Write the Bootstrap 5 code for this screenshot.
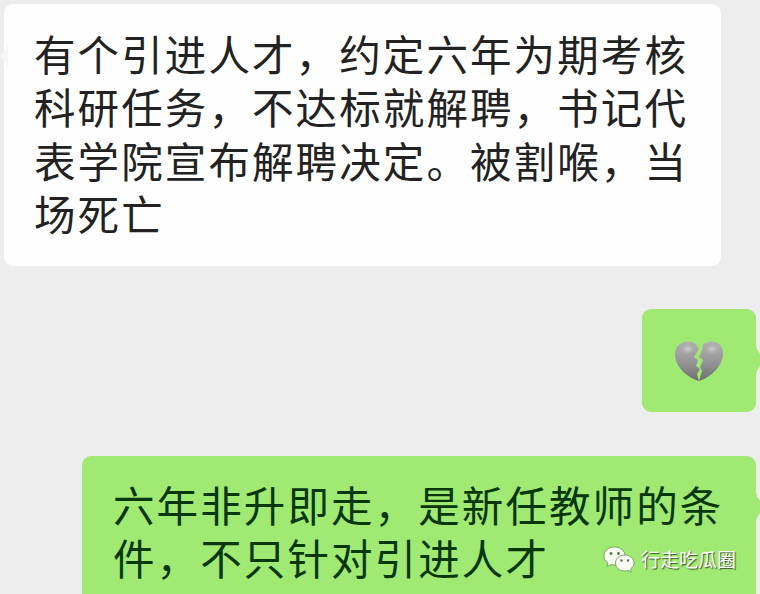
<!DOCTYPE html>
<html lang="zh-CN">
<head>
    <meta charset="UTF-8">
    <meta name="viewport" content="width=device-width, initial-scale=1.0">
    <title>聊天记录</title>
    <link href="https://cdn.jsdelivr.net/npm/bootstrap@5.3.0/dist/css/bootstrap.min.css" rel="stylesheet">
    <style>
        body {
            height: 594px;
            background: #ededed;
            font-family: "Noto Sans CJK SC", sans-serif;
        }
        .chat {
            height: 594px;
            padding: 4px 4px 0;
        }
        .bubble {
            font-size: 41.5px;
            letter-spacing: 2.1px;
            line-height: 53.4px;
            white-space: nowrap;
            border-radius: 9px;
        }
        .bubble-in {
            width: 717px;
            height: 262px;
            padding: 23px 0 0 30px;
            background: #fefefe;
            color: #222;
        }
        .bubble-out {
            background: #a0e972;
            color: #07370b;
        }
        .bubble-heart {
            width: 114px;
            height: 103px;
            margin-top: 43px;
        }
        .bubble-reply {
            width: 674px;
            height: 150px;
            margin-top: 44px;
            padding: 22px 0 0 31px;
        }
        .tail {
            position: absolute;
            width: 8px;
            height: 28px;
        }
        .tail-in { left: -4px; top: 38px; }
        .tail-out { right: -6px; top: 37px; }
        .watermark {
            position: absolute;
            left: 603px;
            top: 544px;
            gap: 6px;
            font-size: 19px;
            line-height: 30px;
            color: #fff;
            text-shadow: 1px 1px 1px #35552a;
        }
    </style>
</head>
<body class="m-0 overflow-hidden">
    <main class="chat d-flex flex-column position-relative overflow-hidden">
        <div class="bubble bubble-in position-relative flex-shrink-0 align-self-start">
            <svg class="tail tail-in" viewBox="0 0 8 28"><path d="M8 0Q7 7 0 14Q7 21 8 28Z" fill="#f6f6f6"/></svg>
            有个引进人才，约定六年为期考核<br>科研任务，不达标就解聘，书记代<br>表学院宣布解聘决定。被割喉，当<br>场死亡
        </div>

        <div class="bubble bubble-out bubble-heart position-relative flex-shrink-0 align-self-end d-flex align-items-center justify-content-center">
            <svg class="tail tail-out" viewBox="0 0 8 28"><path d="M0 0H2Q3 6 8 9V19Q3 22 2 28H0Z" fill="#a0e972"/></svg>
            <svg width="50" height="42" viewBox="0 0 50 42">
                <defs>
                    <linearGradient id="heartFill" x1="0" y1="0" x2="0" y2="1">
                        <stop offset="0" stop-color="#b2b2b2"/>
                        <stop offset=".5" stop-color="#989698"/>
                        <stop offset="1" stop-color="#6c716b"/>
                    </linearGradient>
                    <radialGradient id="heartShine">
                        <stop offset="0" stop-color="#d2d2d2"/>
                        <stop offset="1" stop-color="#aaa" stop-opacity="0"/>
                    </radialGradient>
                </defs>
                <path d="M22 4C16-1 2 1 1 13C0 25 12 37 25 41L23 34L26 29L22 26L24 20L20 17L25 9Z" fill="url(#heartFill)"/>
                <path d="M29 4C37-1 48 1 49 12C50 24 38 37 25 41L28 31L26 27L29 20L25 17L28 10Z" fill="url(#heartFill)"/>
                <ellipse cx="14" cy="9" rx="8" ry="6" fill="url(#heartShine)"/>
                <ellipse cx="38" cy="9" rx="8" ry="6" fill="url(#heartShine)"/>
            </svg>
        </div>

        <div class="bubble bubble-out bubble-reply position-relative flex-shrink-0 align-self-end">
            <svg class="tail tail-out" viewBox="0 0 8 28"><path d="M0 0H2Q3 6 8 9V19Q3 22 2 28H0Z" fill="#a0e972"/></svg>
            六年非升即走，是新任教师的条<br>件，不只针对引进人才
        </div>

        <div class="watermark d-flex align-items-center">
            <svg width="32" height="28" viewBox="0 0 32 28">
                <g fill="#f8fff2" stroke="#6d8e58" stroke-width=".8">
                    <path d="M11.5 2C5 2 1 6 1 11C1 14 2.5 16.500 5 18L4 21.500L8 19.500Q10 20 12 20C18 20 22 16 22 11C22 6 18 2 11.500 2Z"/>
                    <path d="M21.500 10C16 10 12.500 13.500 12.500 18C12.500 22.500 16 26 21.500 26Q23.500 26 25 25.500L28.500 27L27.500 24C29.500 22.500 31 20.500 31 18C31 13.500 27 10 21.500 10Z"/>
                </g>
                <g fill="#58764a">
                    <circle cx="8" cy="8.500" r="1.400"/>
                    <circle cx="15.500" cy="8.500" r="1.400"/>
                    <circle cx="18.500" cy="15.500" r="1.200"/>
                    <circle cx="25" cy="15.500" r="1.200"/>
                </g>
            </svg>
            <span>行走吃瓜圈</span>
        </div>
    </main>

    <script src="https://cdn.jsdelivr.net/npm/bootstrap@5.3.0/dist/js/bootstrap.bundle.min.js"></script>
</body>
</html>
